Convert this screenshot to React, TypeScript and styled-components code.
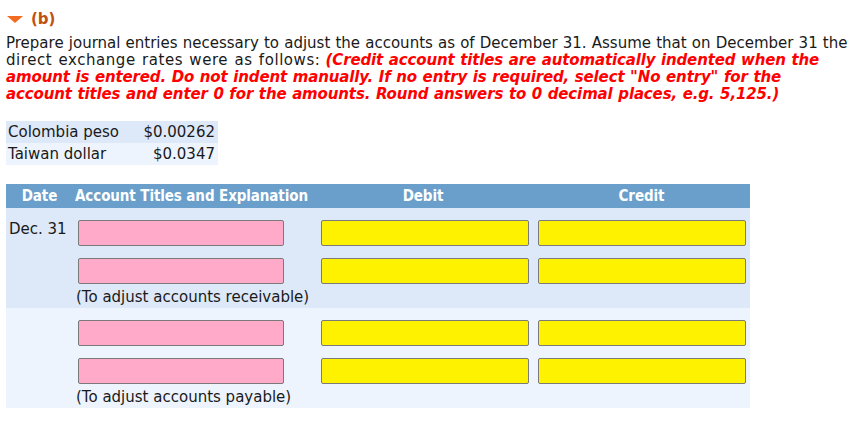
import React from "react";
import styled, { createGlobalStyle } from "styled-components";

const Global = createGlobalStyle`
  html, body { margin: 0; padding: 0; background: #fff; }
  body { font-family: Verdana, "DejaVu Sans", sans-serif; color: #1a1a1a; }
`;

const Page = styled.div`
  padding: 8px 6px 0 6px;
  width: 851px;
  box-sizing: border-box;
`;

const PartHead = styled.div`
  display: flex;
  align-items: center;
  gap: 8px;
  height: 22px;
  padding-left: 1px;
`;

const Triangle = styled.span`
  width: 0;
  height: 0;
  border-left: 8.5px solid transparent;
  border-right: 8.5px solid transparent;
  border-top: 7px solid #f26b21;
`;

const PartLabel = styled.span`
  font-weight: bold;
  font-size: 15px;
  color: #c2500f;
`;

const Instructions = styled.p`
  margin: 5px 0 0 0;
  font-size: 15px;
  line-height: 17px;
  word-spacing: 0.4px;
  white-space: nowrap;
`;

const Wide = styled.span`
  letter-spacing: 0.55px;
  word-spacing: 1px;
`;

const Red = styled.em`
  color: #ff0000;
  font-weight: bold;
  letter-spacing: -0.14px;
  word-spacing: 0.6px;
`;

const RateTable = styled.div`
  margin-top: 18px;
  display: grid;
  grid-template-columns: 135px 77px;
  width: 212px;
  font-size: 15px;
`;

const RateCell = styled.div<{ $alt?: boolean; $right?: boolean }>`
  background: ${(p) => (p.$alt ? "#edf4fd" : "#dde8f8")};
  height: 22px;
  line-height: 22px;
  padding: 0 ${(p) => (p.$right ? "3px" : "0")} 0 ${(p) => (p.$right ? "0" : "2px")};
  text-align: ${(p) => (p.$right ? "right" : "left")};
`;

const Journal = styled.div`
  margin-top: 19px;
  width: 744px;
  display: grid;
  grid-template-columns: 67px 240px 220px 217px;
`;

const HeadCell = styled.div<{ $align?: string }>`
  background: #6a9fcb;
  color: #fff;
  font-family: Tahoma, "DejaVu Sans Condensed", "DejaVu Sans", sans-serif;
  font-weight: bold;
  font-size: 15px;
  height: 24px;
  line-height: 24px;
  text-align: ${(p) => p.$align || "center"};
  padding-left: ${(p) => (p.$align === "left" ? "2px" : "0")};
  letter-spacing: -0.1px;
`;

const Group = styled.div<{ $alt?: boolean }>`
  grid-column: 1 / -1;
  display: grid;
  grid-template-columns: subgrid;
  background: ${(p) => (p.$alt ? "#edf4fd" : "#dde8f8")};
  padding: 12px 0 0 0;
  height: 100px;
  box-sizing: border-box;
  grid-auto-rows: 26px;
  row-gap: 12px;
  align-content: start;
`;

const DateCell = styled.div`
  font-size: 15px;
  line-height: 18px;
  padding: 0 0 0 3px;
`;

const Field = styled.div<{ $kind: "acct" | "debit" | "credit" }>`
  width: ${(p) => (p.$kind === "acct" ? "206px" : "208px")};
  height: 26px;
  box-sizing: border-box;
  margin-left: ${(p) => (p.$kind === "debit" ? "8px" : "5px")};
  background: ${(p) => (p.$kind === "acct" ? "#ffaac9" : "#fff200")};
  border: 1px solid #7a7a7a;
  border-radius: 2px;
`;

const Note = styled.div`
  grid-column: 2 / -1;
  font-size: 15px;
  line-height: 17px;
  margin-top: -7px;
  padding-left: 3px;
`;

const Empty = styled.div``;

function EntryGroup({ date, note, alt }: { date?: string; note: string; alt?: boolean }) {
  return (
    <Group $alt={alt}>
      {date ? <DateCell>{date}</DateCell> : <Empty />}
      <Field $kind="acct" />
      <Field $kind="debit" />
      <Field $kind="credit" />
      <Empty />
      <Field $kind="acct" />
      <Field $kind="debit" />
      <Field $kind="credit" />
      <Empty />
      <Note>{note}</Note>
    </Group>
  );
}

export default function App() {
  return (
    <>
      <Global />
      <Page>
        <PartHead>
          <Triangle />
          <PartLabel>(b)</PartLabel>
        </PartHead>
        <Instructions>
          Prepare journal entries necessary to adjust the accounts as of December 31. Assume that on December 31 the
          <br />
          <Wide>direct exchange rates were as follows:</Wide>{" "}
          <Red>
            (Credit account titles are automatically indented when the
            <br />
            amount is entered. Do not indent manually. If no entry is required, select "No entry" for the
            <br />
            account titles and enter 0 for the amounts. Round answers to 0 decimal places, e.g. 5,125.)
          </Red>
        </Instructions>
        <RateTable>
          <RateCell>Colombia peso</RateCell>
          <RateCell $right>$0.00262</RateCell>
          <RateCell $alt>Taiwan dollar</RateCell>
          <RateCell $alt $right>$0.0347</RateCell>
        </RateTable>
        <Journal>
          <HeadCell>Date</HeadCell>
          <HeadCell $align="left">Account Titles and Explanation</HeadCell>
          <HeadCell>Debit</HeadCell>
          <HeadCell>Credit</HeadCell>
          <EntryGroup date="Dec. 31" note="(To adjust accounts receivable)" />
          <EntryGroup alt note="(To adjust accounts payable)" />
        </Journal>
      </Page>
    </>
  );
}
